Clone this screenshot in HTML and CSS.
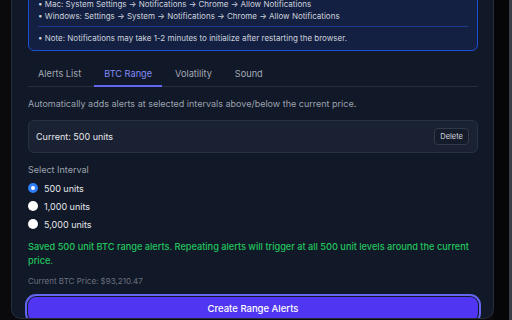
FILE: index.html
```html
<!DOCTYPE html>
<html lang="en">
<head>
    <meta charset="UTF-8">
    <title>BTC Price Alerts</title>
    <link rel="stylesheet" href="styles.css">
</head>
<body>
    <div class="panel">
        <div class="info-box">
            <ul class="info-list">
                <li>• Mac: System Settings → Notifications → Chrome → Allow Notifications</li>
                <li>• Windows: Settings → System → Notifications → Chrome → Allow Notifications</li>
            </ul>
            <div class="info-note">• Note: Notifications may take 1-2 minutes to initialize after restarting the browser.</div>
        </div>

        <div class="tabs">
            <button class="tab">Alerts List</button>
            <button class="tab active">BTC Range</button>
            <button class="tab">Volatility</button>
            <button class="tab">Sound</button>
        </div>

        <p class="desc">Automatically adds alerts at selected intervals above/below the current price.</p>

        <div class="current-card">
            <span>Current: 500 units</span>
            <button class="delete-btn">Delete</button>
        </div>

        <div class="interval-label">Select Interval</div>
        <label class="radio-row"><span class="radio checked"></span>500 units</label>
        <label class="radio-row"><span class="radio"></span>1,000 units</label>
        <label class="radio-row"><span class="radio"></span>5,000 units</label>

        <p class="saved-msg">Saved 500 unit BTC range alerts. Repeating alerts will trigger at all 500 unit levels around the current price.</p>

        <div class="price">Current BTC Price: $93,210.47</div>

        <button class="create-btn">Create Range Alerts</button>
    </div>
    <div class="side"></div>
</body>
</html>
```

FILE: styles.css
```css
body {
    margin: 0;
    font-family: 'Inter', 'Noto Sans', sans-serif;
    background: #0a0a0c;
    display: flex;
    height: 320px;
    overflow: hidden;
}

.panel {
    width: 450px;
    height: 318px;
    margin-left: 11px;
    padding: 0 15px 0 16px;
    background: #111827;
    border: 1px solid #252c3a;
    border-top: none;
    border-radius: 0 0 10px 10px;
    overflow: hidden;
    flex-shrink: 0;
}

.side {
    flex: 1;
    background: linear-gradient(to right, #060608 15px, #3b3e46 15px);
}

.info-box {
    margin-top: -11px;
    padding: 8px 9px 6px;
    background: #142041;
    border: 1px solid #1d4ed8;
    border-radius: 6px;
    color: #cdd3de;
    font-size: 8px;
    line-height: 12px;
}

.info-list {
    list-style: none;
    margin: 0;
    padding: 0 0 4px;
    border-bottom: 1px solid #1e3a8a;
}

.info-note {
    margin-top: 5px;
}

.tabs {
    display: flex;
    gap: 3px;
    margin-top: 11px;
    border-bottom: 1px solid #262d3b;
}

.tab {
    background: none;
    border: none;
    border-bottom: 2px solid transparent;
    margin-bottom: -1px;
    padding: 6px 10px 5px;
    font-family: inherit;
    font-size: 9.2px;
    line-height: 12px;
    color: #a3a9b6;
}

.tab.active {
    color: #818cf8;
    border-bottom-color: #6366f1;
}

.desc {
    margin: 11px 0 0;
    font-size: 9px;
    line-height: 12px;
    color: #9ca3af;
}

.current-card {
    display: flex;
    justify-content: space-between;
    align-items: center;
    margin-top: 10px;
    padding: 7px 8px 7px 7px;
    background: #1a2132;
    border: 1px solid #283142;
    border-radius: 6px;
    font-size: 9px;
    color: #e5e7eb;
}

.delete-btn {
    height: 17px;
    padding: 0 5px;
    background: #141b2a;
    border: 1px solid #323a4a;
    border-radius: 4px;
    font-family: inherit;
    font-size: 7.5px;
    color: #d1d5db;
}

.interval-label {
    margin-top: 11px;
    font-size: 9px;
    line-height: 12px;
    color: #9ca3af;
}

.radio-row {
    display: flex;
    align-items: center;
    gap: 6px;
    height: 18px;
    font-size: 9px;
    color: #e5e7eb;
}

.interval-label + .radio-row {
    margin-top: 3px;
}

.radio {
    width: 10px;
    height: 10px;
    border-radius: 50%;
    background: #fff;
    box-sizing: border-box;
}

.radio.checked {
    border: 3px solid #2f7cf6;
}

.saved-msg {
    margin: 7px 0 0;
    font-size: 9.2px;
    font-weight: 500;
    line-height: 14px;
    color: #22c55e;
}

.price {
    margin-top: 7px;
    font-size: 8px;
    line-height: 12px;
    color: #6b7280;
}

.create-btn {
    display: block;
    width: 100%;
    margin-top: 10px;
    padding: 6px 0;
    background: #5036f2;
    border: none;
    border-radius: 8px;
    box-shadow: 0 0 0 1px #111827, 0 0 0 3px #6366f1;
    font-family: inherit;
    font-size: 9.5px;
    font-weight: 500;
    line-height: 12px;
    color: #fff;
}
```
